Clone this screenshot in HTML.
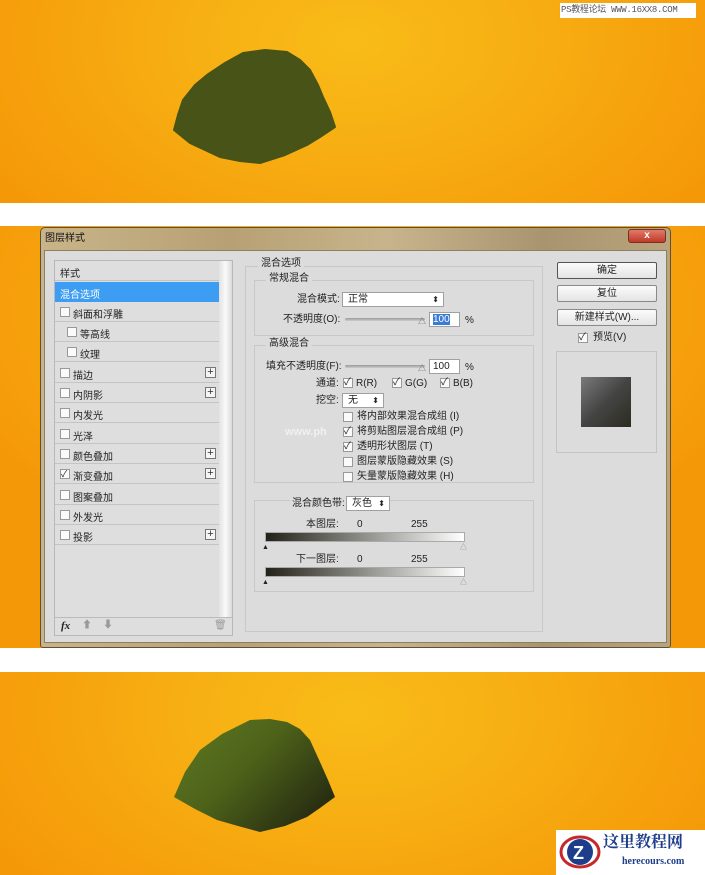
<!DOCTYPE html>
<html><head><meta charset="utf-8"><style>
*{margin:0;padding:0;box-sizing:border-box}
body{width:705px;height:875px;position:relative;overflow:hidden;background:#fff;font-family:"Liberation Sans","Noto Sans CJK SC",sans-serif;font-size:10px;color:#222}
.or{position:absolute;left:0;width:705px;background:radial-gradient(ellipse 420px 260px at 50% 20%,#f8bc18 0%,#f7ad12 45%,#f59808 100%)}
.a{position:absolute}
.t{position:absolute;white-space:nowrap;font-size:10px;line-height:12px}
.cb{position:absolute;width:10px;height:10px;border:1px solid #999;background:#fafafa}
.row{position:absolute;left:55px;width:164px;height:20px;border-bottom:1px solid #c4c4c4}
.row span{position:absolute;top:4px;font-size:10px;white-space:nowrap}
.plus{position:absolute;left:150px;top:4px;width:11px;height:11px;border:1px solid #777;background:#f4f4f4;font-size:11px;line-height:9px;text-align:center;color:#333}
.btn{position:absolute;left:557px;width:100px;height:17px;border:1px solid #8a8a8a;border-radius:2px;background:linear-gradient(#fbfbfb,#e4e4e4);text-align:center;font-size:10px;line-height:15px}
.sel{position:absolute;height:15px;border:1px solid #a0a0a0;background:#fff;font-size:10px;line-height:13px;padding-left:5px}
.sel:after{content:"⬍";position:absolute;right:4px;top:0;font-size:8px}
.grp{position:absolute;border:1px solid #c8c8c8}
.inp{position:absolute;height:15px;border:1px solid #a0a0a0;background:#fff;font-size:10px;line-height:13px;padding-left:3px}
.sl{position:absolute;height:3px;background:linear-gradient(#999,#ccc);border-radius:2px}
</style></head><body>
<div class="or" style="top:0;height:203px"></div>
<div class="or" style="top:226px;height:422px"></div>
<div class="or" style="top:672px;height:203px"></div>
<div class="a" style="left:560px;top:3px;width:136px;height:15px;background:#fff;font-family:'Liberation Mono','Noto Sans CJK SC',monospace;font-size:9px;line-height:15px;color:#555;padding-left:1px;white-space:nowrap;overflow:hidden;letter-spacing:-0.3px">PS教程论坛 WWW.16XX8.COM</div>
<svg class="a" style="left:0;top:0" width="705" height="203"><polygon points="174,130 178,115 183,100 195,85 207,75 225,63 243,53 265,50 287,52 300,60 310,70 318,85 323,97 330,112 335,127 320,137 307,145 285,155 260,163 240,161 220,157 205,150 190,143" fill="#475317" stroke="#475317" stroke-linejoin="round" stroke-width="2"/></svg>
<svg class="a" style="left:0;top:672" width="705" height="203"><defs><linearGradient id="g" x1="0" y1="0" x2="1" y2="0.7"><stop offset="0" stop-color="#5f7a22"/><stop offset="0.5" stop-color="#4d6119"/><stop offset="1" stop-color="#262c12"/></linearGradient></defs><polygon points="174,125 185,100 200,78 222,62 250,48 270,47 287,50 300,57 310,68 320,90 328,108 335,125 320,136 307,145 285,154 260,160 238,154 217,148 195,137" fill="url(#g)"/></svg>
<div class="a" style="left:556px;top:830px;width:149px;height:45px;background:#fff"></div>
<svg class="a" style="left:558px;top:832px" width="44" height="40"><ellipse cx="22" cy="20" rx="19" ry="15" fill="none" stroke="#c8282a" stroke-width="3"/><circle cx="22" cy="20" r="13" fill="#1e3e8c"/><text x="15" y="27" font-size="18" font-weight="bold" fill="#fff" font-family="Liberation Sans">Z</text></svg>
<div class="t" style="left:603px;top:834px;font-size:16px;line-height:18px;font-weight:bold;color:#1e3e8c;font-family:'Liberation Serif','Noto Serif CJK SC',serif">这里教程网</div>
<div class="t" style="left:622px;top:856px;font-size:10px;font-weight:bold;color:#1e3e8c;font-family:'Liberation Serif',serif">herecours.com</div>
<!-- dialog -->
<div class="a" style="left:40px;top:227px;width:631px;height:421px;border:1px solid #5a5040;border-radius:5px 5px 3px 3px;background:linear-gradient(90deg,#c9b48a,#b7a074 30%,#c8b48c 55%,#a99470 80%,#b9a47c)"></div>
<div class="t" style="left:45px;top:233px;color:#111">图层样式</div>
<div class="a" style="left:628px;top:229px;width:38px;height:14px;border-radius:3px;background:linear-gradient(#e07a6a,#c03a2a);border:1px solid #7a3020;color:#fff;font-size:10px;line-height:12px;text-align:center;font-weight:bold">x</div>
<div class="a" style="left:44px;top:250px;width:623px;height:393px;background:#dcdcdc;border:1px solid #8c8060"></div>
<!-- left list -->
<div class="a" style="left:54px;top:260px;width:179px;height:376px;border:1px solid #b8b8b8;background:#dedede"></div>
<div class="a" style="left:219px;top:261px;width:13px;height:356px;background:linear-gradient(90deg,#e2e2e2,#fafafa,#dadada)"></div>
<div class="row" style="top:261px"><span style="left:5px">样式</span></div>
<div class="row" style="top:282px;background:#3d9df2;border:none;height:20px"><span style="left:5px;color:#fff">混合选项</span></div>
<div class="row" style="top:302px"><div class="cb" style="left:5px;top:5px"></div><span style="left:18px">斜面和浮雕</span></div>
<div class="row" style="top:322px"><div class="cb" style="left:12px;top:5px"></div><span style="left:25px">等高线</span></div>
<div class="row" style="top:342px"><div class="cb" style="left:12px;top:5px"></div><span style="left:25px">纹理</span></div>
<div class="row" style="top:363px"><div class="cb" style="left:5px;top:5px"></div><span style="left:18px">描边</span><div class="plus">+</div></div>
<div class="row" style="top:383px"><div class="cb" style="left:5px;top:5px"></div><span style="left:18px">内阴影</span><div class="plus">+</div></div>
<div class="row" style="top:403px"><div class="cb" style="left:5px;top:5px"></div><span style="left:18px">内发光</span></div>
<div class="row" style="top:424px"><div class="cb" style="left:5px;top:5px"></div><span style="left:18px">光泽</span></div>
<div class="row" style="top:444px"><div class="cb" style="left:5px;top:5px"></div><span style="left:18px">颜色叠加</span><div class="plus">+</div></div>
<div class="row" style="top:464px"><div class="cb" style="left:5px;top:5px;font-size:9px;line-height:8px">✓</div><span style="left:18px">渐变叠加</span><div class="plus">+</div></div>
<div class="row" style="top:485px"><div class="cb" style="left:5px;top:5px"></div><span style="left:18px">图案叠加</span></div>
<div class="row" style="top:505px"><div class="cb" style="left:5px;top:5px"></div><span style="left:18px">外发光</span></div>
<div class="row" style="top:525px"><div class="cb" style="left:5px;top:5px"></div><span style="left:18px">投影</span><div class="plus">+</div></div>
<div class="a" style="left:55px;top:617px;width:177px;height:1px;background:#bbb"></div>
<div class="t" style="left:61px;top:620px;font-style:italic;font-weight:bold;font-family:'Liberation Serif',serif;font-size:11px">fx</div>
<div class="t" style="left:82px;top:620px;color:#999">⬆</div>
<div class="t" style="left:103px;top:620px;color:#999">⬇</div>
<div class="t" style="left:214px;top:620px;color:#999">🗑</div>
<!-- middle -->
<div class="grp" style="left:245px;top:266px;width:298px;height:366px"></div>
<div class="t" style="left:258px;top:258px;background:#dcdcdc;padding:0 3px">混合选项</div>
<div class="grp" style="left:254px;top:280px;width:280px;height:56px"></div>
<div class="t" style="left:266px;top:273px;background:#dcdcdc;padding:0 3px">常规混合</div>
<div class="t" style="left:297px;top:294px">混合模式:</div>
<div class="sel" style="left:342px;top:292px;width:102px">正常</div>
<div class="t" style="left:283px;top:314px">不透明度(O):</div>
<div class="sl" style="left:345px;top:318px;width:80px"></div>
<div class="t" style="left:418px;top:316px;font-size:8px;color:#666">△</div>
<div class="inp" style="left:429px;top:312px;width:31px"><span style="background:#3a7bd5;color:#fff">100</span></div>
<div class="t" style="left:465px;top:315px">%</div>
<div class="grp" style="left:254px;top:345px;width:280px;height:138px"></div>
<div class="t" style="left:266px;top:338px;background:#dcdcdc;padding:0 3px">高级混合</div>
<div class="t" style="left:266px;top:361px">填充不透明度(F):</div>
<div class="sl" style="left:345px;top:365px;width:80px"></div>
<div class="t" style="left:418px;top:363px;font-size:8px;color:#666">△</div>
<div class="inp" style="left:429px;top:359px;width:31px">100</div>
<div class="t" style="left:465px;top:362px">%</div>
<div class="t" style="left:316px;top:378px">通道:</div>
<div class="cb" style="left:343px;top:378px;font-size:10px;line-height:8px">✓</div><div class="t" style="left:356px;top:378px">R(R)</div>
<div class="cb" style="left:392px;top:378px;font-size:10px;line-height:8px">✓</div><div class="t" style="left:405px;top:378px">G(G)</div>
<div class="cb" style="left:440px;top:378px;font-size:10px;line-height:8px">✓</div><div class="t" style="left:453px;top:378px">B(B)</div>
<div class="t" style="left:316px;top:395px">挖空:</div>
<div class="sel" style="left:342px;top:393px;width:42px">无</div>
<div class="cb" style="left:343px;top:412px"></div><div class="t" style="left:357px;top:411px">将内部效果混合成组 (I)</div>
<div class="cb" style="left:343px;top:427px;font-size:10px;line-height:8px">✓</div><div class="t" style="left:357px;top:426px">将剪贴图层混合成组 (P)</div>
<div class="t" style="left:285px;top:426px;color:#f0f0f0;font-weight:bold;font-size:11px">www.ph</div>
<div class="cb" style="left:343px;top:442px;font-size:10px;line-height:8px">✓</div><div class="t" style="left:357px;top:441px">透明形状图层 (T)</div>
<div class="cb" style="left:343px;top:457px"></div><div class="t" style="left:357px;top:456px">图层蒙版隐藏效果 (S)</div>
<div class="cb" style="left:343px;top:472px"></div><div class="t" style="left:357px;top:471px">矢量蒙版隐藏效果 (H)</div>
<div class="grp" style="left:254px;top:500px;width:280px;height:92px"></div>
<div class="t" style="left:290px;top:498px;background:#dcdcdc;padding:0 2px">混合颜色带:</div>
<div class="sel" style="left:346px;top:496px;width:44px">灰色</div>
<div class="t" style="left:306px;top:519px">本图层:</div>
<div class="t" style="left:357px;top:519px">0</div><div class="t" style="left:411px;top:519px">255</div>
<div class="a" style="left:265px;top:532px;width:200px;height:10px;background:linear-gradient(90deg,#222218,#fff);border:1px solid #aaa"></div>
<div class="t" style="left:262px;top:542px;font-size:7px">▲</div><div class="t" style="left:460px;top:542px;font-size:7px;color:#888">△</div>
<div class="t" style="left:296px;top:554px">下一图层:</div>
<div class="t" style="left:357px;top:554px">0</div><div class="t" style="left:411px;top:554px">255</div>
<div class="a" style="left:265px;top:567px;width:200px;height:10px;background:linear-gradient(90deg,#222218,#fff);border:1px solid #aaa"></div>
<div class="t" style="left:262px;top:577px;font-size:7px">▲</div><div class="t" style="left:460px;top:577px;font-size:7px;color:#888">△</div>
<!-- right -->
<div class="btn" style="top:262px;border-color:#555">确定</div>
<div class="btn" style="top:285px">复位</div>
<div class="btn" style="top:309px">新建样式(W)...</div>
<div class="cb" style="left:578px;top:333px;font-size:10px;line-height:8px">✓</div>
<div class="t" style="left:593px;top:332px">预览(V)</div>
<div class="a" style="left:556px;top:351px;width:101px;height:102px;border:1px solid #c4c4c4"></div>
<div class="a" style="left:581px;top:377px;width:50px;height:50px;background:linear-gradient(135deg,#7a7a7a,#444 50%,#2c2c20)"></div>
</body></html>
